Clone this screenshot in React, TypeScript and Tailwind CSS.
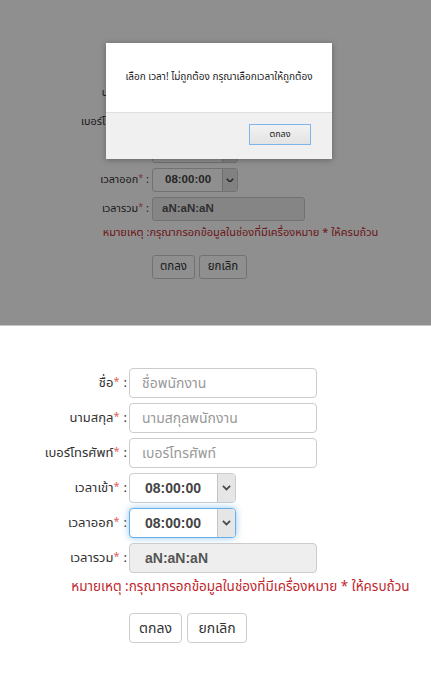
import React from 'react';

const thai = { fontFamily: 'Tahoma, "Noto Sans Thai", "Noto Sans Thai UI", "Loma", "Garuda", "DejaVu Sans", sans-serif' };
const latin = { fontFamily: '"Liberation Sans", Arial, sans-serif' };

type Size = 'sm' | 'lg';

const cls = {
  lg: {
    wrap: 'pt-[42px] pb-[55px] bg-white',
    rows: 'flex flex-col gap-[5px]',
    row: 'flex items-center h-[30px]',
    label: 'w-[129px] shrink-0 pr-[2px] text-right text-[13px] text-[#333] leading-[30px]',
    star: 'text-[11px] text-[#e0605c] relative top-[-2px] mr-[4px]',
    input: 'h-[30px] w-[188px] rounded-[4px] border border-[#ccc] bg-white px-[12px] text-[14px] text-[#999] flex items-center',
    select: 'h-[30px] w-[107px] rounded-[4px] border bg-white flex items-stretch',
    selText: 'flex-1 pl-[15px] text-[14px] font-bold text-[#444] flex items-center',
    arrow: 'w-[18px] border-l border-[#c4c4c4] bg-[#e6e6e6] rounded-r-[3px] flex items-center justify-center',
    total: 'h-[30px] w-[188px] rounded-[4px] border border-[#ccc] bg-[#eee] pl-[15px] text-[14px] font-bold text-[#555] flex items-center',
    note: 'mt-[6px] pl-[50px] flex justify-center text-[13.5px] leading-[16px] text-[#c0282d]',
    btns: 'mt-[18px] pl-[129px] flex gap-[5px]',
    ok: 'h-[30px] w-[53px] rounded-[4px] border border-[#ccc] bg-white text-[14px] text-[#333]',
    cancel: 'h-[30px] w-[60px] rounded-[4px] border border-[#ccc] bg-white text-[14px] text-[#333]',
    chev: 9,
  },
  sm: {
    wrap: 'pt-[52px] bg-white h-[325px]',
    rows: 'flex flex-col gap-[5px]',
    row: 'flex items-center h-[24px]',
    label: 'w-[152px] shrink-0 pr-[3px] text-right text-[10.8px] text-[#333] leading-[24px]',
    star: 'text-[9px] text-[#e0605c] relative top-[-2px] mr-[3px]',
    input: 'h-[24px] w-[153px] rounded-[3px] border border-[#ccc] bg-white px-[10px] text-[11.5px] text-[#999] flex items-center',
    select: 'h-[24px] w-[86px] rounded-[3px] border bg-white flex items-stretch',
    selText: 'flex-1 pl-[12px] text-[11.5px] font-bold text-[#444] flex items-center',
    arrow: 'w-[15px] border-l border-[#c4c4c4] bg-[#e6e6e6] rounded-r-[2px] flex items-center justify-center',
    total: 'h-[24px] w-[153px] rounded-[3px] border border-[#ccc] bg-[#eee] pl-[9px] text-[11.5px] font-bold text-[#555] flex items-center',
    note: 'mt-[5px] pl-[50px] flex justify-center text-[11px] leading-[14px] text-[#c0282d]',
    btns: 'mt-[15px] pl-[152px] flex gap-[4px]',
    ok: 'h-[24px] w-[43px] rounded-[3px] border border-[#ccc] bg-white text-[11.5px] text-[#333]',
    cancel: 'h-[24px] w-[48px] rounded-[3px] border border-[#ccc] bg-white text-[11.5px] text-[#333]',
    chev: 8,
  },
};

function Chevron({ w }: { w: number }) {
  return (
    <svg width={w} height={w * 0.6} viewBox="0 0 10 6">
      <path d="M1 1l4 4 4-4" fill="none" stroke="#4a4a4a" strokeWidth="2" />
    </svg>
  );
}

function Label({ size, text }: { size: Size; text: string }) {
  return (
    <div className={cls[size].label} style={thai}>
      {text}
      <span className={cls[size].star}>*</span>:
    </div>
  );
}

function Form({ size, focusOut, coveredFirst }: { size: Size; focusOut?: boolean; coveredFirst?: boolean }) {
  const c = cls[size];
  const fields = [
    { label: 'ชื่อ', ph: 'ชื่อพนักงาน' },
    { label: 'นามสกุล', ph: 'นามสกุลพนักงาน' },
    { label: 'เบอร์โทรศัพท์', ph: 'เบอร์โทรศัพท์' },
  ];
  return (
    <div className={c.wrap}>
      <div className={c.rows}>
        {fields.map((f, i) => (
          // the first row sits wholly under the alert box, so it is kept in flow but not painted
          <div key={f.label} className={coveredFirst && i === 0 ? `${c.row} invisible` : c.row}>
            <Label size={size} text={f.label} />
            <div className={c.input} style={thai}>{f.ph}</div>
          </div>
        ))}
        <div className={c.row}>
          <Label size={size} text="เวลาเข้า" />
          <div className={`${c.select} border-[#ccc]`}>
            <div className={c.selText} style={latin}>08:00:00</div>
            <div className={c.arrow}><Chevron w={c.chev} /></div>
          </div>
        </div>
        <div className={c.row}>
          <Label size={size} text="เวลาออก" />
          <div
            className={
              focusOut
                ? `${c.select} border-[#66afe9] shadow-[0_0_7px_rgba(102,175,233,0.7)]`
                : `${c.select} border-[#ccc]`
            }
          >
            <div className={c.selText} style={latin}>08:00:00</div>
            <div className={c.arrow}><Chevron w={c.chev} /></div>
          </div>
        </div>
        <div className={c.row}>
          <Label size={size} text="เวลารวม" />
          <div className={c.total} style={latin}>aN:aN:aN</div>
        </div>
      </div>
      <div className={c.note} style={thai}>
        <span>หมายเหตุ :กรุณากรอกข้อมูลในช่องที่มีเครื่องหมาย * ให้ครบถ้วน</span>
      </div>
      <div className={c.btns} style={thai}>
        <button className={c.ok}>ตกลง</button>
        <button className={c.cancel}>ยกเลิก</button>
      </div>
    </div>
  );
}

export default function App() {
  return (
    <div className="w-[431px] min-h-[698px] bg-white">
      {/* form behind the alert */}
      <div className="relative h-[326px] overflow-hidden border-b border-[#c8c8c8]">
        <Form size="sm" coveredFirst />
        <div className="absolute inset-0 bg-black/[0.44]" />
        <div className="absolute left-[106px] top-[43px] w-[226px] h-[116px] flex flex-col bg-white shadow-[0_1px_6px_rgba(0,0,0,0.3)]">
          <div className="h-[69px] flex items-center justify-center text-[10px] text-[#222]" style={thai}>
            เลือก เวลา! ไม่ถูกต้อง กรุณาเลือกเวลาให้ถูกต้อง
          </div>
          <div className="flex-1 bg-[#f0f0f0] border-t border-[#dfdfdf] flex justify-end items-start pt-[11px] pr-[21px]">
            <button
              className="h-[21px] w-[62px] border border-[#7eb4ea] bg-gradient-to-b from-[#f2f2f2] to-[#e3e3e3] text-[9px] text-[#222]"
              style={thai}
            >
              ตกลง
            </button>
          </div>
        </div>
      </div>
      <Form size="lg" focusOut />
    </div>
  );
}
